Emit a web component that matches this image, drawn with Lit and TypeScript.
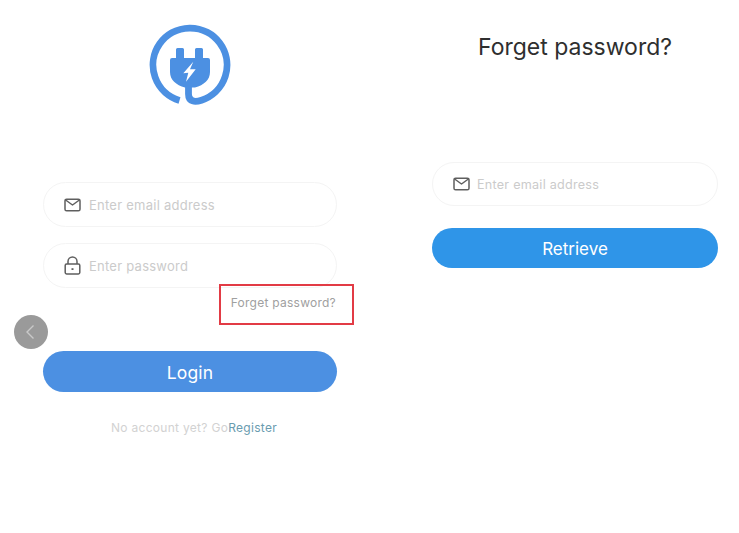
import { LitElement, html, css } from "lit";
import { customElement } from "lit/decorators.js";

const mail = html`<svg class="ico" width="17" height="14" viewBox="0 0 17 14" fill="none" stroke="#5f5f5f" stroke-width="1.5" stroke-linejoin="round" stroke-linecap="round"><rect x="1" y="1.2" width="15" height="11.6" rx="1.6"/><path d="M1.6 2l6.9 5 6.9-5"/></svg>`;
const lock = html`<svg class="ico" width="17" height="19" viewBox="0 0 17 19" fill="none" stroke="#5f5f5f" stroke-width="1.5" stroke-linejoin="round"><rect x="1.2" y="8" width="14.6" height="10" rx="1.4"/><path d="M4 8V5.4a4.5 4.5 0 0 1 9 0V8"/><path d="M8.5 12.2v1.8" stroke-width="2"/></svg>`;

@customElement("app-root")
export class AppRoot extends LitElement {
  static styles = css`
    :host {
      display: block;
      width: 739px;
      height: 533px;
      background: #fff;
      font-family: Inter, "Liberation Sans", sans-serif;
      position: relative;
      overflow: hidden;
    }
    .page {
      display: grid;
      grid-template-columns: 294px 286px;
      column-gap: 95px;
      padding: 0 21px 0 43px;
    }
    .left, .right { display: flex; flex-direction: column; }
    .logo { align-self: center; margin-top: 24px; display: block; }
    .field {
      box-sizing: border-box;
      display: flex;
      align-items: center;
      border: 1px solid #f4f4f4;
      border-radius: 23px;
      height: 45px;
      padding-left: 20px;
      gap: 8px;
      font-size: 13px;
      letter-spacing: 0.25px;
      color: #cbcbcb;
    }
    .ico { flex: none; }
    .email { margin-top: 76px; }
    .pass { margin-top: 16px; }
    .forgot {
      align-self: flex-end;
      margin: 6px 1px 0 0;
      font-size: 12px;
      line-height: 17px;
      letter-spacing: 0.25px;
      color: #a0a0a0;
      position: relative;
    }
    .mark {
      position: absolute;
      left: -12px;
      right: -18px;
      top: -10px;
      bottom: -14px;
      border: 2.5px solid #e23b45;
    }
    .btn {
      box-sizing: border-box;
      display: flex;
      align-items: center;
      justify-content: center;
      border-radius: 21px;
      color: #fff;
      padding-top: 1px;
    }
    .login {
      height: 41px;
      margin-top: 40px;
      background: #4c90e2;
      font-size: 17.5px;
      letter-spacing: 0.2px;
    }
    .reg {
      align-self: center;
      margin: 27px 0 0 8px;
      font-size: 12px;
      line-height: 17px;
      letter-spacing: 0.3px;
      color: #d2d2d2;
    }
    .reg span { color: #6a9cb0; }
    h1 {
      margin: 32px 0 0;
      text-align: center;
      font-size: 23px;
      line-height: 30px;
      font-weight: 400;
      color: #2f2f2f;
    }
    .right .field {
      margin-top: 100px;
      height: 44px;
      gap: 7px;
      font-size: 12.6px;
    }
    .retrieve {
      height: 40px;
      margin-top: 22px;
      background: #2f95e8;
      font-size: 17px;
    }
    .back {
      position: absolute;
      left: 14px;
      top: 315px;
      width: 34px;
      height: 34px;
      border-radius: 50%;
      background: #9a9a9a;
      display: flex;
      align-items: center;
      justify-content: center;
    }
    .back svg { margin-right: 2px; }
  `;

  render() {
    return html`
      <div class="page">
        <div class="left">
          <svg class="logo" width="82" height="82" viewBox="0 0 82 82" fill="none">
            <path d="M30.500 76.500A37 37 0 1 1 52.500 76.200C46 78.200 39.500 78 39.500 70V60" stroke="#4c90e2" stroke-width="6.800"/>
            <path fill="#4c90e2" d="M27 25.500a1.500 1.500 0 0 1 1.500-1.500h5a1.500 1.500 0 0 1 1.500 1.500V34h11v-8.500a1.500 1.500 0 0 1 1.500-1.500h5a1.500 1.500 0 0 1 1.500 1.500V34h5a2 2 0 0 1 2 2v12c0 8-6 13-15 15.500H36C27 61 21 56 21 48V36a2 2 0 0 1 2-2h4z"/>
            <path fill="#fff" d="M44.300 37.700L34.300 49.300 39.300 48.700 37 57.700 46.700 45.300 41 45.300z"/>
          </svg>
          <div class="field email">${mail}<span>Enter email address</span></div>
          <div class="field pass">${lock}<span>Enter password</span></div>
          <div class="forgot">Forget password?<div class="mark"></div></div>
          <div class="btn login">Login</div>
          <div class="reg">No account yet? Go<span>Register</span></div>
        </div>
        <div class="right">
          <h1>Forget password?</h1>
          <div class="field">${mail}<span>Enter email address</span></div>
          <div class="btn retrieve">Retrieve</div>
        </div>
      </div>
      <div class="back">
        <svg width="12" height="16" viewBox="0 0 12 16" fill="none" stroke="#c9c9c9" stroke-width="1.4"><path d="M9.500 1.500L3 8l6.500 6.500"/></svg>
      </div>
    `;
  }
}
